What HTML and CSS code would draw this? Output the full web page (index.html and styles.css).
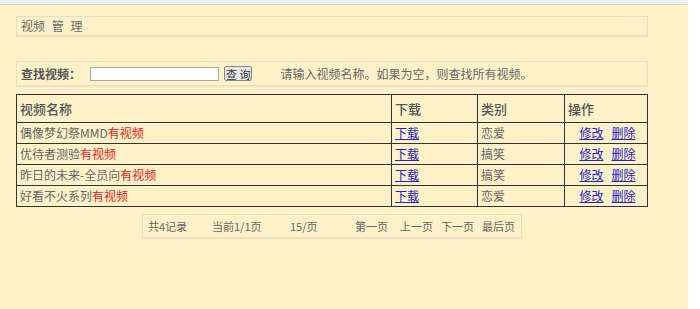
FILE: index.html
```html
<!DOCTYPE html>
<html lang="zh-CN">
<head>
  <meta charset="UTF-8">
  <meta name="viewport" content="width=device-width, initial-scale=1.0">
  <title>视频管理</title>
  <link rel="stylesheet" href="styles.css">
</head>
<body>
  <div class="page">
    <div class="topbar"></div>
    <div class="content">
      <div class="title-box">视频 管 理</div>

      <div class="search-box">
        <span class="search-label">查找视频：</span>
        <input type="text" class="search-input">
        <button class="search-btn">查 询</button>
        <span class="search-hint">请输入视频名称。如果为空，则查找所有视频。</span>
      </div>

      <table class="video-table">
        <tr class="head">
          <th class="col-name">视频名称</th>
          <th class="col-down">下载</th>
          <th class="col-type">类别</th>
          <th class="col-op">操作</th>
        </tr>
        <tr>
          <td>偶像梦幻祭MMD<span class="red">有视频</span></td>
          <td><a href="#">下载</a></td>
          <td>恋爱</td>
          <td class="ops"><a href="#">修改</a><a href="#">删除</a></td>
        </tr>
        <tr>
          <td>优待者测验<span class="red">有视频</span></td>
          <td><a href="#">下载</a></td>
          <td>搞笑</td>
          <td class="ops"><a href="#">修改</a><a href="#">删除</a></td>
        </tr>
        <tr>
          <td>昨日的未来-全员向<span class="red">有视频</span></td>
          <td><a href="#">下载</a></td>
          <td>搞笑</td>
          <td class="ops"><a href="#">修改</a><a href="#">删除</a></td>
        </tr>
        <tr>
          <td>好看不火系列<span class="red">有视频</span></td>
          <td><a href="#">下载</a></td>
          <td>恋爱</td>
          <td class="ops"><a href="#">修改</a><a href="#">删除</a></td>
        </tr>
      </table>

      <div class="pager">
        <span class="p-total">共4记录</span>
        <span class="p-current">当前1/1页</span>
        <span class="p-size">15/页</span>
        <span class="p-first">第一页</span>
        <span class="p-link">上一页</span>
        <span class="p-link">下一页</span>
        <span>最后页</span>
      </div>
    </div>
  </div>
</body>
</html>
```

FILE: styles.css
```css
html {
  background: #ffffff;
}
body {
  margin: 0;
  padding: 0;
  font-family: "Noto Sans CJK SC", "DejaVu Sans", sans-serif;
  font-size: 12px;
  color: #666;
}
.page {
  width: 688px;
  height: 309px;
  background: #fff2c9;
}
.topbar {
  height: 4px;
  background: #eef0f0;
  border-bottom: 1px solid #e4dcc0;
}
.content {
  padding: 11px 0 0 16px;
  width: 632px;
}
.title-box {
  height: 18px;
  line-height: 18px;
  padding-left: 4px;
  border: 1px solid #ebdfbf;
  box-shadow: 0 1px 1px #efe3c5;
  font-size: 12px;
  word-spacing: 4px;
}
.search-box {
  margin-top: 25px;
  height: 23px;
  border: 1px solid #ebdfbf;
  box-shadow: 0 1px 1px #efe3c5;
  display: flex;
  align-items: center;
  padding-left: 4px;
  white-space: nowrap;
}
.search-label {
  font-weight: bold;
  color: #555;
  width: 69px;
}
.search-input {
  width: 125px;
  height: 10px;
  margin: 0;
  padding: 1px;
  border: 1px solid #a9a9a9;
  background: #fff;
}
.search-btn {
  margin: 0 0 0 5px;
  padding: 0 1px;
  height: 15px;
  line-height: 12px;
  font-family: inherit;
  font-size: 11px;
  color: #333;
  background: #e8e8e8;
  border: 1px solid #888;
  border-radius: 2px;
}
.search-hint {
  margin-left: 28px;
}
.video-table {
  margin-top: 8px;
  width: 632px;
  border-collapse: collapse;
  border: 1px solid #333;
}
.video-table th,
.video-table td {
  border: 1px solid #333;
  text-align: left;
  padding: 0 0 0 3px;
  height: 20px;
  line-height: 18px;
  white-space: nowrap;
}
.video-table th {
  height: 27px;
  font-size: 13px;
  font-weight: 500;
  color: #555;
}
.col-name {
  width: 371px;
}
.col-down {
  width: 82px;
}
.col-type {
  width: 83px;
}
.video-table td.ops {
  text-align: center;
}
.ops a + a {
  margin-left: 8px;
}
.video-table a {
  color: #2222cc;
}
.red {
  color: #e8241c;
}
.pager {
  margin: 7px auto 0;
  width: 373px;
  height: 22px;
  padding-left: 5px;
  border: 1px solid #ebdfbf;
  box-shadow: 0 1px 1px #efe3c5;
  display: flex;
  align-items: center;
  font-size: 11px;
  white-space: nowrap;
  color: #666;
}
.p-total {
  width: 64px;
}
.p-current {
  width: 78px;
}
.p-size {
  width: 65px;
}
.p-first {
  width: 45px;
}
.p-link {
  width: 41px;
}
```
